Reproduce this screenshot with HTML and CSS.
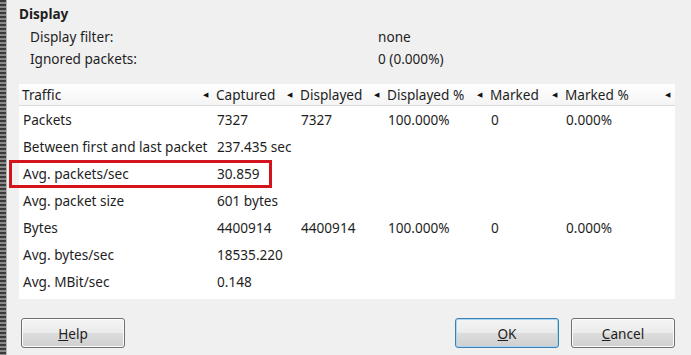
FILE: index.html
```html
<!DOCTYPE html>
<html lang="en">
<head>
    <meta charset="UTF-8">
    <title>Summary</title>
    <link rel="stylesheet" href="styles.css">
</head>
<body>
    <div class="edge"></div>
    <div class="dialog">
        <div class="section-title">Display</div>
        <div class="info">
            <div class="info-label">Display filter:</div>
            <div class="info-value">none</div>
            <div class="info-label">Ignored packets:</div>
            <div class="info-value">0 (0.000%)</div>
        </div>

        <div class="table-wrap">
            <table class="stats">
                <colgroup>
                    <col class="c1"><col class="c2"><col class="c3"><col class="c4"><col class="c5"><col class="c6">
                </colgroup>
                <thead>
                    <tr>
                        <th><div class="th-in"><span>Traffic</span><span class="sort">&#9664;</span></div></th>
                        <th><div class="th-in"><span>Captured</span><span class="sort">&#9664;</span></div></th>
                        <th><div class="th-in"><span>Displayed</span><span class="sort">&#9664;</span></div></th>
                        <th><div class="th-in"><span>Displayed %</span><span class="sort">&#9664;</span></div></th>
                        <th><div class="th-in"><span>Marked</span><span class="sort">&#9664;</span></div></th>
                        <th><div class="th-in"><span>Marked %</span><span class="sort">&#9664;</span></div></th>
                    </tr>
                </thead>
                <tbody>
                    <tr><td>Packets</td><td>7327</td><td>7327</td><td>100.000%</td><td>0</td><td>0.000%</td></tr>
                    <tr><td>Between first and last packet</td><td>237.435 sec</td><td></td><td></td><td></td><td></td></tr>
                    <tr><td>Avg. packets/sec</td><td>30.859</td><td></td><td></td><td></td><td></td></tr>
                    <tr><td>Avg. packet size</td><td>601 bytes</td><td></td><td></td><td></td><td></td></tr>
                    <tr><td>Bytes</td><td>4400914</td><td>4400914</td><td>100.000%</td><td>0</td><td>0.000%</td></tr>
                    <tr><td>Avg. bytes/sec</td><td>18535.220</td><td></td><td></td><td></td><td></td></tr>
                    <tr><td>Avg. MBit/sec</td><td>0.148</td><td></td><td></td><td></td><td></td></tr>
                </tbody>
            </table>
            <div class="highlight"></div>
        </div>

        <div class="buttons">
            <button class="btn"><u>H</u>elp</button>
            <div class="spacer"></div>
            <button class="btn btn-default"><u>O</u>K</button>
            <button class="btn"><u>C</u>ancel</button>
        </div>
    </div>
</body>
</html>
```

FILE: styles.css
```css
body {
    margin: 0;
    width: 691px;
    height: 355px;
    overflow: hidden;
    display: flex;
    background-color: #f0f0f0;
    font-family: "Noto Sans", "Open Sans", sans-serif;
    font-size: 13.6px;
    color: #1e1e1e;
}
.edge {
    width: 6px;
    flex-shrink: 0;
    background-color: #5a5a5a;
    background-image: repeating-linear-gradient(180deg, #3a3a3a 0 2px, #8a8a8a 2px 4px);
    border-right: 1px solid #b8b8b8;
}
.dialog {
    flex: 1;
    padding: 4px 16px 0 12px;
}
.section-title {
    font-weight: bold;
    height: 22px;
    line-height: 20px;
}
.info {
    display: grid;
    grid-template-columns: 348px auto;
    padding-left: 11px;
    margin-bottom: 14px;
}
.info-label, .info-value {
    height: 22px;
    line-height: 22px;
}
.table-wrap {
    position: relative;
    background-color: white;
    padding-bottom: 4px;
}
.stats {
    border-collapse: collapse;
    table-layout: fixed;
    width: 656px;
}
.c1 { width: 194px; }
.c2 { width: 84px; }
.c3 { width: 87px; }
.c4 { width: 103px; }
.c5 { width: 75px; }
.c6 { width: 113px; }
.stats th {
    font-weight: normal;
    text-align: left;
    height: 21px;
    padding: 0;
    background: linear-gradient(#ffffff, #f4f4f4);
    border-bottom: 1px solid #dcdcdc;
}
.th-in {
    display: flex;
    align-items: center;
    justify-content: space-between;
    padding: 0 5px 0 3px;
}
.sort {
    font-size: 7px;
    color: #111;
}
.stats td {
    height: 27px;
    padding: 0 0 0 4px;
    white-space: nowrap;
    overflow: hidden;
}
.highlight {
    position: absolute;
    left: -10px;
    top: 76px;
    width: 257px;
    height: 22px;
    border: 3px solid #d3141c;
}
.buttons {
    display: flex;
    gap: 12px;
    margin-top: 19px;
    padding-left: 2px;
}
.spacer {
    flex: 1;
}
.btn {
    width: 104px;
    height: 30px;
    font-family: inherit;
    font-size: 13.6px;
    color: #1e1e1e;
    border: 1px solid #707070;
    border-radius: 3px;
    background: linear-gradient(#f4f4f4 0%, #ebebeb 50%, #dddddd 51%, #cfcfcf 100%);
    box-shadow: inset 0 0 0 1px #fcfcfc;
}
.btn-default {
    border-color: #3c7fb1;
    box-shadow: inset 0 0 0 1px #a6d6f3;
}
```
